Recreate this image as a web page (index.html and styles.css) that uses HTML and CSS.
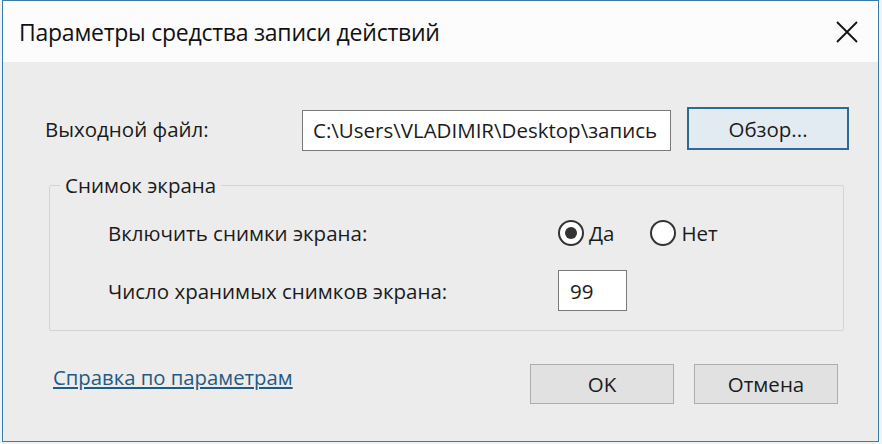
FILE: index.html
```html
<!DOCTYPE html>
<html lang="ru">
<head>
<meta charset="utf-8">
<title>Параметры средства записи действий</title>
<link rel="stylesheet" href="styles.css">
</head>
<body>
<div class="window">
  <div class="titlebar">
    <span class="title">Параметры средства записи действий</span>
    <span class="close" aria-label="Закрыть">
      <svg width="22" height="22" viewBox="0 0 22 22"><path d="M1 1 L21 21 M21 1 L1 21" stroke="#111" stroke-width="1.8" fill="none"/></svg>
    </span>
  </div>
  <div class="content">
    <div class="file-row">
      <label class="file-label">Выходной файл:</label>
      <input class="path" type="text" value="C:\Users\VLADIMIR\Desktop\запись" readonly>
      <button class="btn btn-default browse">Обзор...</button>
    </div>
    <fieldset class="group">
      <legend>Снимок экрана</legend>
      <div class="grow">
        <span class="glabel">Включить снимки экрана:</span>
        <div class="radios">
          <span class="radio"><span class="circle checked"></span>Да</span>
          <span class="radio"><span class="circle"></span>Нет</span>
        </div>
      </div>
      <div class="grow">
        <span class="glabel">Число хранимых снимков экрана:</span>
        <input class="spin" type="text" value="99" readonly>
      </div>
    </fieldset>
    <div class="bottom-row">
      <a class="help" href="#">Справка по параметрам</a>
      <div class="buttons">
        <button class="btn">OK</button>
        <button class="btn">Отмена</button>
      </div>
    </div>
  </div>
</div>
</body>
</html>
```
FILE: styles.css
```css
* { box-sizing: border-box; }
html, body { margin: 0; padding: 0; }
body {
  background: #eef3f6;
  font-family: "Open Sans", "Noto Sans", sans-serif;
  color: #1b1b1b;
  width: 882px;
  height: 444px;
  overflow: hidden;
}
.window {
  margin: 0 3px 0 2px;
  height: 442px;
  border: 1px solid #3a7bab;
  background: #ececec;
  display: flex;
  flex-direction: column;
}
.titlebar {
  height: 61px;
  background: #fcfcfc;
  display: flex;
  align-items: center;
  justify-content: space-between;
  padding: 0 20px 0 16px;
}
.title {
  font-size: 23px;
  color: #111;
  letter-spacing: -0.25px;
}
.close { display: flex; width: 22px; height: 22px; }
.content {
  flex: 1;
  background: #ececec;
  padding: 0 0 0 42px;
  font-size: 20.5px;
}
.file-row {
  display: flex;
  align-items: center;
  margin-top: 45px;
  height: 43px;
}
.file-label { width: 257px; }
.path {
  width: 369px;
  height: 41px;
  margin-top: 3px;
  border: 1px solid #7a7a7a;
  background: #fff;
  font: inherit;
  color: #1b1b1b;
  padding: 0 0 0 10px;
  outline: none;
}
.btn {
  font: inherit;
  color: #1b1b1b;
  background: #e1e1e1;
  border: 1px solid #adadad;
  width: 144px;
  height: 40px;
  padding: 0;
}
.btn-default {
  border: 2px solid #2f6a93;
  background: #e2ebf2;
}
.browse { width: 162px; height: 43px; margin-left: 16px; }
.group {
  margin: 21px 0 0 4px;
  width: 795px;
  border: 1px solid #d4d4d4;
  border-radius: 2px;
  padding: 14px 0 19px 0;
}
.group legend {
  margin-left: 10px;
  padding: 0 5px;
  line-height: 28px;
}
.grow {
  display: flex;
  align-items: center;
  padding-left: 58px;
}
.grow + .grow { margin-top: 17px; }
.grow:first-of-type { height: 40px; }
.glabel { width: 450px; }
.radios { display: flex; align-items: center; }
.radio { display: flex; align-items: center; margin-right: 36px; }
.circle {
  width: 26px;
  height: 26px;
  border: 2px solid #333;
  border-radius: 50%;
  background: #fff;
  margin-right: 5px;
  display: flex;
  align-items: center;
  justify-content: center;
}
.circle.checked::after {
  content: "";
  width: 12px;
  height: 12px;
  border-radius: 50%;
  background: #333;
}
.spin {
  width: 69px;
  height: 41px;
  border: 1px solid #7a7a7a;
  background: #fff;
  font: inherit;
  color: #1b1b1b;
  padding: 0 0 0 11px;
  outline: none;
}
.bottom-row {
  display: flex;
  align-items: center;
  justify-content: space-between;
  margin: 33px 40px 0 8px;
}
.help {
  color: #1f5b82;
  text-decoration: underline;
  font-size: 20.3px;
  margin-top: -14px;
}
.buttons { display: flex; gap: 20px; }
```
